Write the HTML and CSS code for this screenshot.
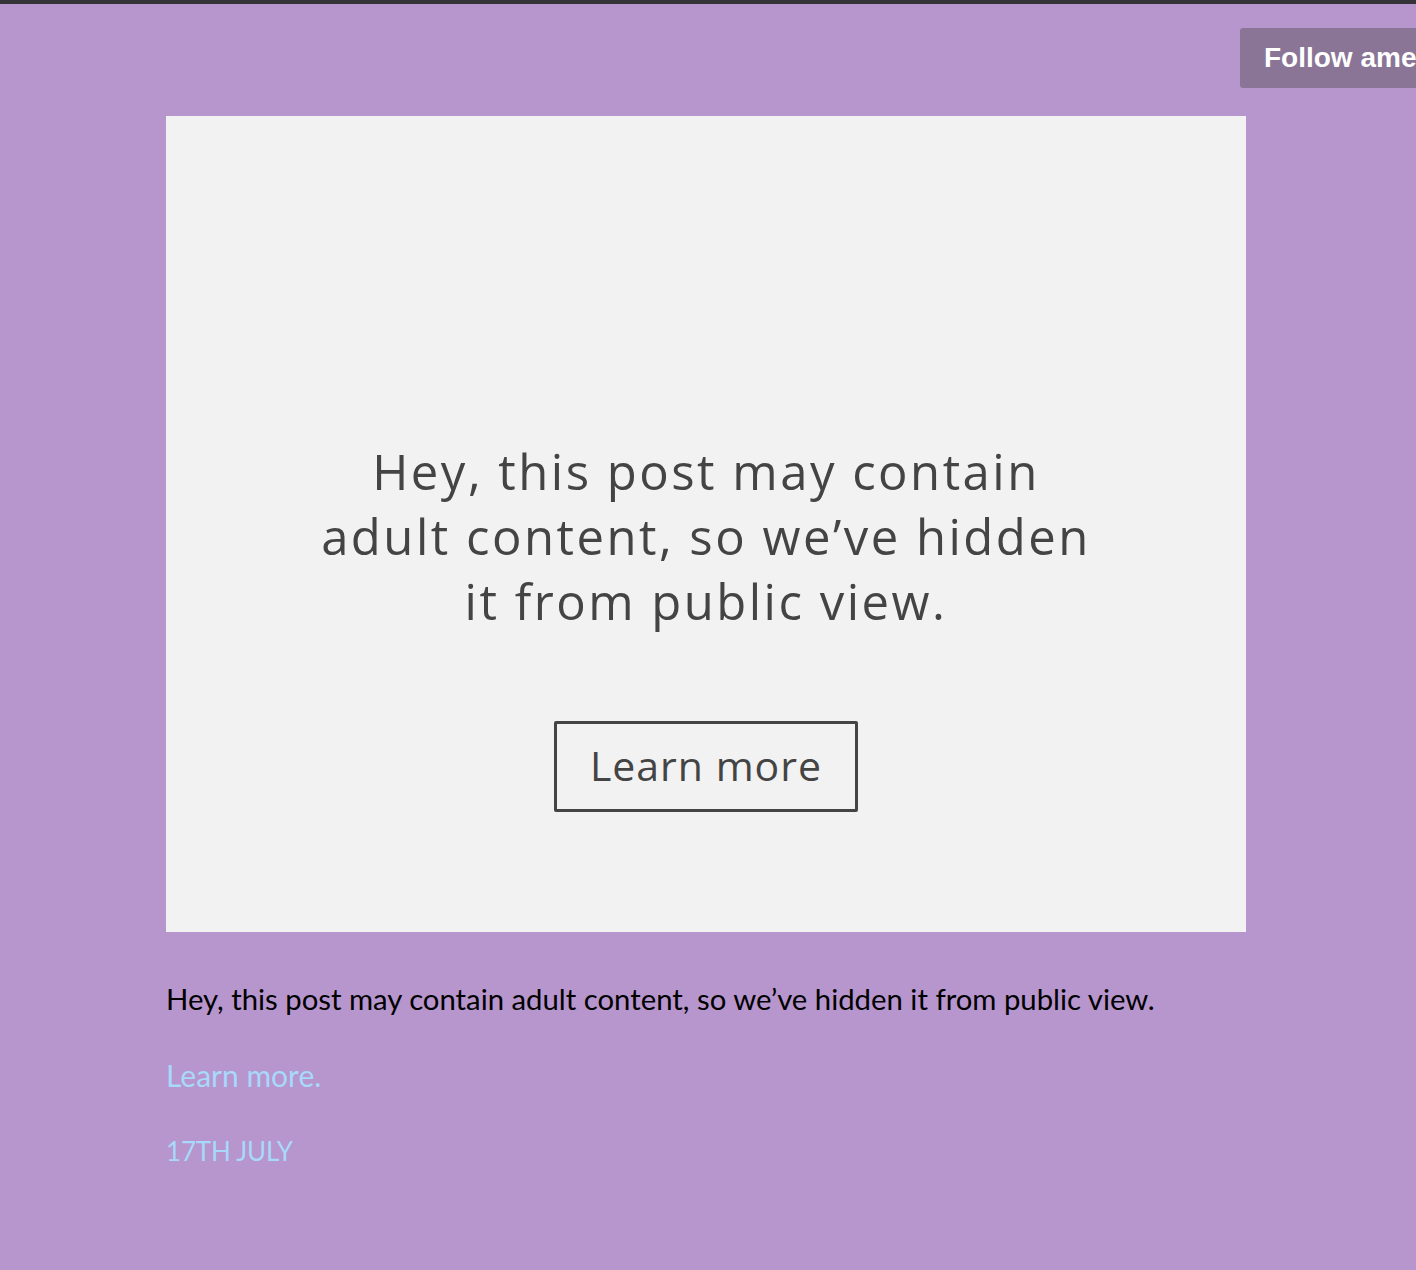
FILE: index.html
```html
<!DOCTYPE html>
<html>
<head>
<meta charset="utf-8">
<link rel="stylesheet" href="styles.css">
</head>
<body>
<div class="topbar"></div>
<a class="follow" href="#">Follow ame</a>
<main class="post">
  <div class="card">
    <p class="card-text">Hey, this post may contain<br>adult content, so we’ve hidden<br>it from public view.</p>
    <a class="card-btn" href="#">Learn more</a>
  </div>
  <p class="caption">Hey, this post may contain adult content, so we’ve hidden it from public view.</p>
  <p class="more"><a href="#">Learn more.</a></p>
  <p class="date">17TH JULY</p>
</main>
</body>
</html>
```
FILE: styles.css
```css
html, body {
  margin: 0;
  padding: 0;
  background: #b795cd;
  height: 100%;
  overflow: hidden;
}
body {
  font-family: Lato, "Open Sans", sans-serif;
  position: relative;
}
.topbar {
  height: 4px;
  background: #333236;
}
.follow {
  position: absolute;
  top: 28px;
  left: 1240px;
  width: 200px;
  height: 60px;
  box-sizing: border-box;
  padding-left: 24px;
  background: #8a7596;
  border-radius: 3px;
  color: #fff;
  font-family: "Liberation Sans", Arial, sans-serif;
  font-weight: bold;
  font-size: 28px;
  line-height: 60px;
  text-decoration: none;
  white-space: nowrap;
}
.post {
  margin-left: 166px;
  width: 1080px;
  padding-top: 112px;
}
.card {
  height: 816px;
  background: #f2f2f2;
  display: flex;
  flex-direction: column;
  align-items: center;
  justify-content: flex-start;
  padding-top: 323px;
  box-sizing: border-box;
}
.card-text {
  margin: 0;
  text-align: center;
  font-family: "Open Sans", sans-serif;
  font-size: 49px;
  line-height: 65px;
  color: #444444;
  letter-spacing: 2.5px;
}
.card-btn {
  margin-top: 87px;
  width: 304px;
  height: 91px;
  box-sizing: border-box;
  border: 3px solid #444444;
  border-radius: 2px;
  display: flex;
  align-items: center;
  justify-content: center;
  padding-bottom: 4px;
  font-family: "Open Sans", sans-serif;
  font-size: 41px;
  color: #444444;
  text-decoration: none;
  letter-spacing: 1px;
}
.caption {
  margin: 47px 0 0;
  font-size: 29.3px;
  line-height: 40px;
  color: #000;
}
.more {
  margin: 36px 0 0;
  font-size: 30px;
  line-height: 40px;
}
.more a {
  color: #a8d8fa;
  text-decoration: none;
}
.date {
  margin: 36px 0 0;
  font-size: 26px;
  line-height: 40px;
  color: #a8d8fa;
  letter-spacing: -0.2px;
}
```
